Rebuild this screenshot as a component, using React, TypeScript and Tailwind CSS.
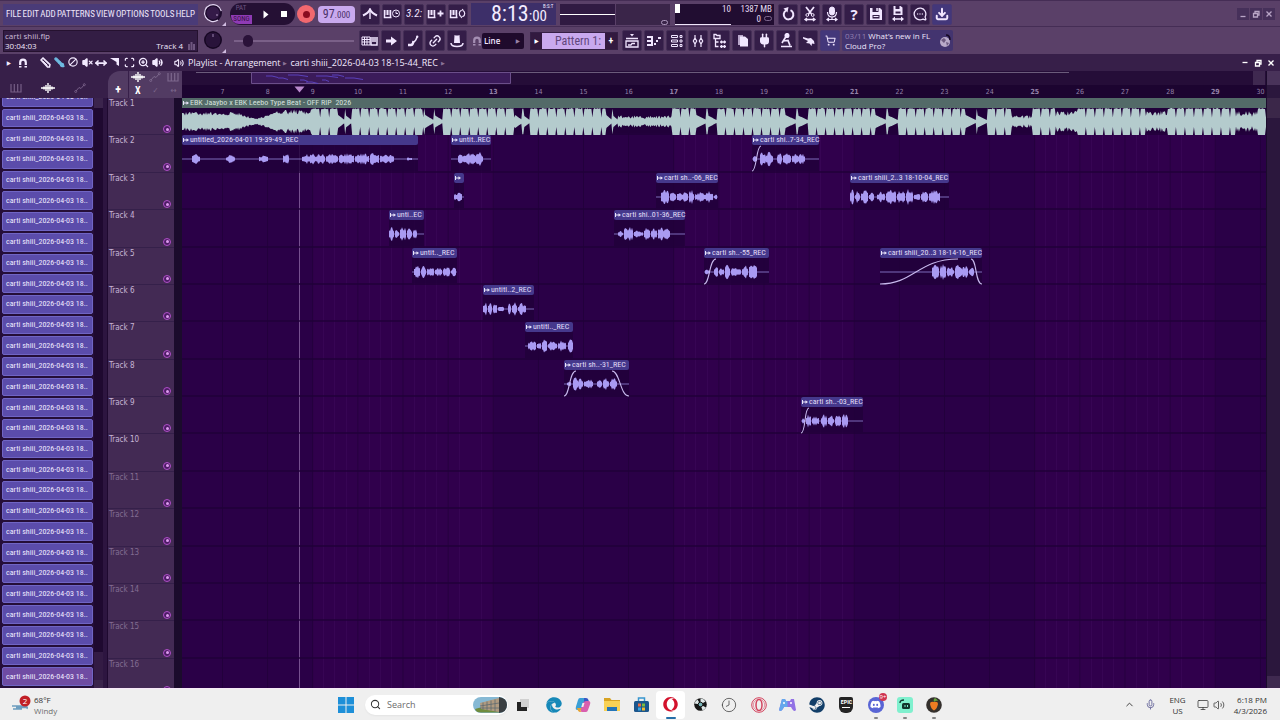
import React from "react";
import {
  Mic, MessageCircleMore, Download, ShoppingCart, Link2, Search, Ban,
  VolumeX, Volume2, MoveHorizontal, Scan, ZoomIn, Brush, Plug,
  ChevronUp, Clock, Monitor,
} from "lucide-react";
import { FaOpera, FaSteam, FaDiscord, FaEdge } from "react-icons/fa";

const noise = (n: number) => {
  const s = Math.sin(n * 127.1 + 11.7) * 43758.5453;
  return s - Math.floor(s);
};

type Blob = [number, number, number];

function blobPath(blobs: Blob[], mid: number, seed: number) {
  return blobs
    .map(([a, b, amp], i) => {
      const top: string[] = [];
      const bottom: string[] = [];
      for (let x = a; x <= b; x++) {
        const t = (x - a) / Math.max(1, b - a);
        const env = Math.pow(Math.sin(Math.PI * (0.12 + t * 0.76)), 0.5);
        const h = Math.max(0.7, (amp + 1) * env * (0.4 + 0.6 * noise(x + seed + i)));
        top.push(`${x},${(mid - h).toFixed(1)}`);
        bottom.unshift(`${x},${(mid + h).toFixed(1)}`);
      }
      return `M${top.join("L")}L${bottom.join("L")}Z`;
    })
    .join("");
}

type Zone = [number, number, "intro" | "full" | "gap" | "low" | "spiky"];
const zones: Zone[] = [
  [0, 130, "intro"], [130, 156, "full"], [156, 170, "gap"], [170, 243, "full"], [243, 261, "gap"],
  [261, 333, "full"], [333, 348, "gap"], [348, 424, "full"], [424, 436, "gap"], [436, 490, "low"],
  [490, 514, "full"], [514, 535, "gap"], [535, 603, "full"], [603, 626, "gap"], [626, 693, "full"],
  [693, 716, "gap"], [716, 783, "full"], [783, 805, "gap"], [805, 829, "full"], [829, 850, "low"],
  [850, 873, "full"], [873, 895, "spiky"], [895, 963, "full"], [963, 985, "spiky"], [985, 1053, "full"],
  [1053, 1075, "spiky"], [1075, 1084, "full"],
];

function beatPath() {
  const top: string[] = [];
  const bottom: string[] = [];
  for (const [a, b, kind] of zones) {
    for (let x = a; x < b; x++) {
      const r = noise(x);
      const t = (x - a) / (b - a);
      let v = 1;
      if (kind === "full") v = (x - a) % 9 === 8 ? 0.3 : 0.9 + r * 0.1;
      if (kind === "gap") v = t > 0.46 && t < 0.54 ? 0.95 : 0.08 + 0.4 * (1 - ((t * 2) % 1));
      if (kind === "low") v = 0.2 + r * 0.25;
      if (kind === "spiky") v = 0.35 + r * 0.45;
      if (kind === "intro") {
        const base = x < 55 ? 0.65 : x < 75 ? 0.65 - (x - 55) * 0.022 : x < 100 ? 0.22 + (x - 75) * 0.024 : 0.8;
        v = base * (0.65 + r * 0.45);
      }
      top.push(`${x},${(13.5 - 13.5 * v).toFixed(1)}`);
      bottom.unshift(`${x},${(13.5 + 13.5 * (kind === "full" ? Math.min(1, v + 0.1) : v)).toFixed(1)}`);
    }
  }
  return `M${top.join("L")}L${bottom.join("L")}Z`;
}

type Clip = { x: number; w: number; label: string; blobs: Blob[]; fade?: string };
const clips: Record<number, Clip[]> = {
  2: [
    { x: 0, w: 236, label: "untitled_2026-04-01 19-39-49_REC", blobs: [[10, 18, 4], [44, 53, 3], [77, 86, 3], [101, 107, 5], [120, 128, 4], [128, 133, 7], [133, 143, 5], [144, 156, 5], [157, 172, 5], [173, 187, 5], [188, 197, 6], [198, 212, 4], [225, 230, 1]] },
    { x: 269, w: 40, label: "untit..REC", blobs: [[7, 12, 4], [12, 24, 6], [24, 32, 7]] },
    { x: 570, w: 67, label: "carti shi..7-34_REC", fade: "M0 25C5 25 4 0 9 0", blobs: [[1, 5, 2], [8, 14, 7], [14, 21, 7], [25, 30, 5], [31, 39, 5], [40, 46, 5], [46, 53, 5]] },
  ],
  3: [
    { x: 272, w: 10, label: "", blobs: [[0, 8, 4]] },
    { x: 474, w: 62, label: "carti sh..-06_REC", blobs: [[5, 13, 7], [14, 20, 4], [21, 32, 4], [33, 38, 7], [39, 50, 4], [50, 57, 6], [58, 61, 3]] },
    { x: 668, w: 99, label: "carti shiii_2..3 18-10-04_REC", blobs: [[0, 4, 8], [5, 10, 5], [11, 18, 7], [19, 24, 4], [27, 35, 5], [36, 46, 7], [47, 55, 6], [56, 63, 8], [64, 70, 3], [71, 78, 5], [79, 90, 7]] },
  ],
  4: [
    { x: 207, w: 35, label: "unti..EC", blobs: [[0, 5, 6], [6, 10, 4], [11, 17, 7], [18, 23, 5], [24, 28, 4]] },
    { x: 432, w: 71, label: "carti shi..01-36_REC", blobs: [[4, 9, 2], [10, 13, 8], [12, 19, 7], [20, 29, 3], [30, 36, 6], [37, 43, 5], [44, 50, 6], [50, 56, 5]] },
  ],
  5: [
    { x: 230, w: 45, label: "untit.._REC", blobs: [[2, 8, 6], [9, 14, 6], [15, 22, 4], [23, 30, 4], [31, 38, 5], [39, 44, 4]] },
    { x: 522, w: 65, label: "carti sh..-55_REC", fade: "M0 25C6 25 5 0 12 0", blobs: [[1, 6, 2], [10, 14, 7], [15, 20, 4], [21, 26, 7], [27, 37, 4], [38, 44, 6], [45, 53, 7]] },
    { x: 698, w: 102, label: "carti shiii_20..3 18-14-16_REC", fade: "M0 25C34 25 38 0 78 0M91 0C97 0 95 25 102 25", blobs: [[52, 59, 7], [60, 66, 8], [67, 74, 5], [75, 82, 7], [82, 88, 6], [89, 94, 4]] },
  ],
  6: [{ x: 301, w: 51, label: "untitl..2_REC", blobs: [[0, 4, 7], [5, 9, 5], [10, 14, 5], [15, 21, 2], [25, 28, 5], [29, 34, 8], [35, 43, 5]] }],
  7: [{ x: 343, w: 48, label: "untitl.._REC", blobs: [[3, 11, 5], [12, 16, 4], [17, 22, 6], [23, 32, 4], [33, 41, 5], [43, 48, 6]] }],
  8: [{ x: 382, w: 65, label: "carti sh..-31_REC", fade: "M0 25C6 25 5 0 12 0M48 0C56 0 56 25 65 25", blobs: [[3, 7, 2], [9, 14, 6], [14, 19, 5], [20, 29, 4], [33, 38, 4], [39, 45, 5], [46, 53, 5]] }],
  9: [{ x: 619, w: 62, label: "carti sh..-03_REC", fade: "M0 25C5 25 3 0 8 0", blobs: [[1, 4, 2], [5, 10, 6], [11, 18, 4], [20, 26, 6], [27, 33, 5], [34, 40, 6], [41, 47, 7]] }],
};

const ClipArrow = () => (
  <svg className="h-2 w-2 shrink-0" viewBox="0 0 8 8" aria-hidden="true">
    <path d="M1.500 2v4M2 4h3" stroke="#e9e4fa" strokeWidth="1" fill="none" /><path d="M4.500 2.200L7 4L4.500 5.800Z" fill="#e9e4fa" />
  </svg>
);

function ClipView({ clip, seed }: { clip: Clip; seed: number }) {
  return (
    <div className="absolute inset-y-0 bg-[#21003a]/80" style={{ left: clip.x, width: clip.w }}>
      <div className="flex h-[10px] items-center rounded-xs bg-[#45388c]">
        <ClipArrow />
        <span className="text-[8px] leading-[10px] whitespace-nowrap text-[#e2dcf6]">{clip.label}</span>
      </div>
      <svg className="h-[27px] w-full" viewBox={`0 0 ${clip.w} 27`} preserveAspectRatio="none" aria-hidden="true">
        <path d={`M0 14H${clip.w}`} stroke="#9c8fe6" strokeWidth="1" opacity="0.75" />
        <path d={blobPath(clip.blobs, 14, seed)} fill="#a99af2" />
        {clip.fade && <path d={clip.fade} transform="translate(0 1)" fill="none" stroke="#c8b9ee" strokeWidth="1.1" />}
      </svg>
    </div>
  );
}

const Btn = ({ label, children, blue }: { label: string; children: React.ReactNode; blue?: boolean }) => (
  <button
    aria-label={label}
    className={`flex h-[21px] w-5 shrink-0 items-center justify-center rounded-xs border text-[#f1e6ff] ${blue ? "border-[#483874] bg-[#43377a]" : "border-[#452f57] bg-[#341d48]"}`}
  >
    {children}
  </button>
);

const Piano = ({ extra }: { extra?: React.ReactNode }) => (
  <svg width="18" height="14" viewBox="0 0 18 14" fill="none" stroke="currentColor" strokeWidth="1.5" aria-hidden="true">
    <path d="M1.500 3v7.500h7M4.500 3v5M7.500 3v7.500" />
    <path d="M3 3v5M6 3v5" strokeWidth="0.8" />
    {extra}
  </svg>
);

const MagnetIcon = ({ className }: { className?: string }) => (
  <svg className={className} width="10" height="10" viewBox="0 0 10 10" fill="none" stroke="currentColor" aria-hidden="true">
    <path d="M2.200 7V4.500a2.800 2.800 0 0 1 5.600 0V7" strokeWidth="2.200" />
    <path d="M1 8.800h2.500M6.500 8.800h2.500" strokeWidth="1.400" />
  </svg>
);

const WaveIcon = ({ className }: { className?: string }) => (
  <svg className={className} width="14" height="10" viewBox="0 0 14 10" stroke="currentColor" strokeWidth="1.400" aria-hidden="true">
    <path d="M0 5h14M3 3.500v3M5 2v6M7 0v10M9 2v6M11 3.500v3" />
  </svg>
);

const LineIcon = () => (
  <svg width="12" height="10" viewBox="0 0 12 10" fill="none" stroke="currentColor" aria-hidden="true">
    <path d="M2 8L5 4.500L7 5.500L10 2" /><circle cx="1.700" cy="8.500" r="1" /><circle cx="10.300" cy="1.700" r="1" />
  </svg>
);

const KeysIcon = () => (
  <svg width="12" height="10" viewBox="0 0 12 10" fill="none" stroke="currentColor" strokeWidth="1.200" aria-hidden="true">
    <path d="M1 1v8h10v-8M4.300 1v8M7.700 1v8" />
  </svg>
);

const Knob = ({ big }: { big?: boolean }) => (
  <svg className="h-6 w-[29px] shrink-0" viewBox="0 0 29 24" role="img" aria-label={big ? "Main volume" : "Main pitch"}>
    <circle cx="12" cy="11" r="9" fill="#1d0b2d" />
    {big ? (
      <>
        <path d="M17 18A8.500 8.500 0 1 1 20.300 9" fill="none" stroke="#e3d5f2" strokeWidth="1.200" />
        <circle cx="12" cy="11" r="6.500" fill="#341a48" />
        <circle cx="16" cy="13" r="1" fill="#8d759e" />
      </>
    ) : (
      <>
        <circle cx="12" cy="11" r="8" fill="#29133a" stroke="#160721" />
        <path d="M12 5v3" stroke="#9a82ae" />
      </>
    )}
    <path d="M25 20v4h-4Z" fill="#cfbbe0" />
  </svg>
);

const WinControls = ({ dim }: { dim?: boolean }) => (
  <div className={`flex items-center gap-px ${dim ? "text-[#b9a5c6]" : "text-white"}`}>
    {["Minimize", "Restore", "Close"].map((n, i) => (
      <button key={n} aria-label={n} className={`flex h-3 w-3 items-center justify-center ${dim ? "bg-[#46305a]" : ""}`}>
        <svg width="8" height="8" viewBox="0 0 8 8" fill="none" stroke="currentColor" strokeWidth="1.300" aria-hidden="true">
          {i === 0 && <path d={dim ? "M1.500 6.500h5" : "M1.500 3.500h5"} />}
          {i === 1 && <path d="M1.500 3.500h4v3.500h-4zM3 3.500v-2h4v3.500h-1.500" />}
          {i === 2 && <path d="M1.500 1.500l5 5M6.500 1.500l-5 5" />}
        </svg>
      </button>
    ))}
  </div>
);

const menus = ["FILE", "EDIT", "ADD", "PATTERNS", "VIEW", "OPTIONS", "TOOLS", "HELP"];

function TopBar() {
  return (
    <header className="shrink-0 bg-[#5a4068]">
      <div className="flex h-[27px] items-center border-t border-b border-[#452d55] pt-px pl-[3px]">
        <nav aria-label="Main menu" className="flex h-[21px] w-[195px] shrink-0 items-center justify-between bg-[#4a3b78] pr-[3px] pl-[3px]">
          {menus.map((m) => (
            <button key={m} className="text-[9px] leading-3 text-[#efe6fa]">{m}</button>
          ))}
        </nav>
        <div className="ml-[3px] flex"><Knob big /></div>
        <div className="flex h-[22px] w-[65px] shrink-0 items-center justify-between rounded-full bg-[#251034] pr-2">
          <button className="flex h-5 w-[22px] flex-col items-center justify-between text-[7px] leading-[9px]">
            <span className="text-[#6c5380]">PAT</span>
            <span className="ml-px w-[21px] rounded-bl-lg bg-[#8f3bb5] text-center text-[#371045]">SONG</span>
          </button>
          <button aria-label="Play" className="pr-px"><svg width="8" height="9" viewBox="0 0 8 9"><path d="M1.500 0.500L6.500 4.500L1.500 8.500Z" fill="#fff" /></svg></button>
          <button aria-label="Stop" className="h-[6px] w-[6px] bg-white" />
        </div>
        <button aria-label="Record" className="ml-0.5 flex size-[18px] shrink-0 items-center justify-center rounded-full bg-[#f2686f]">
          <span className="size-[7px] rounded-full bg-[#8a0d20]" />
        </button>
        <div className="ml-[3px] flex h-[17px] w-[37px] shrink-0 items-center justify-center rounded-sm bg-[#c9a9ee] text-[#4a3068]">
          <button aria-label="Tempo" className="text-[12px] leading-4">97<span className="text-[9px]">.000</span></button>
        </div>
        <div className="ml-[5px] flex shrink-0 gap-0.5">
          <Btn label="Metronome"><svg width="16" height="14" viewBox="0 0 16 14" fill="none" stroke="currentColor"><path d="M8 1v11" strokeWidth="1.400" /><path d="M8 2.500Q6.500 6 1 8.500M8 2.500Q9.500 6 15 8.500" strokeWidth="2" /></svg></Btn>
          <Btn label="Wait for input"><Piano extra={<><circle cx="13" cy="6.500" r="3.500" strokeWidth="1" /><path d="M13 4.500v2h2" strokeWidth="1" /></>} /></Btn>
          <Btn label="Countdown"><span className="text-[11px] leading-3 italic">3.2:</span></Btn>
          <Btn label="Overdub"><Piano extra={<path d="M10.500 6.500h6M13.500 3.500v6" strokeWidth="1.800" />} /></Btn>
          <Btn label="Loop record"><Piano extra={<path d="M12 3.500a3.500 3.500 0 0 0 0 6M14 3.500a3.500 3.500 0 0 1 0 6M14 2l-1.500 2M12 11l1.500-2" strokeWidth="1.200" />} /></Btn>
        </div>
        <div className="ml-[3px] flex h-[22px] w-[85px] shrink-0 items-start justify-end bg-[#3d2f69] pr-[9px] text-[#f3ecff]">
          <span className="text-[22px] leading-[22px]">8:13<span className="text-[15px]">:00</span></span>
          <span className="w-0 -translate-x-1 text-[5px] leading-[6px]">B:S:T</span>
        </div>
        <div className="ml-[4px] grid h-[21px] w-[110px] shrink-0 grid-cols-2 gap-px">
          <div className="flex items-center bg-[#301a42]"><span className="h-px w-full bg-white" /></div>
          <div className="flex items-end justify-end bg-[#3a2549] pr-0.5"><span className="h-[5px] w-[7px] rounded-full border border-[#ad98bd]" /></div>
        </div>
        <div className="ml-[5px] flex h-[21px] w-[99px] shrink-0 items-start bg-[#210d31] text-[9px] leading-[10px] whitespace-nowrap text-[#e6dcf2]">
          <div className="flex h-[21px] w-[46px] flex-col justify-between"><span className="h-[9px] w-[5px] bg-white" /><span className="mr-[-10px] h-px bg-[#f0e6fa]" /></div>
          <div className="w-[10px] text-right">10</div>
          <div className="flex-1 pr-0.5 text-right"><div>1387 MB</div><div className="flex items-center justify-end gap-[3px]">0<span className="h-[5px] w-2 rounded-full border border-[#7c668d]" /></div></div>
        </div>
        <div className="ml-[4px] flex shrink-0 gap-0.5">
          <Btn label="Undo"><svg width="13" height="14" viewBox="0 0 13 14" fill="none"><path d="M8.500 3.200a4.800 4.800 0 1 1-4.500.3" stroke="currentColor" strokeWidth="2" /><path d="M6.500 0l-5 1.500l4 4z" fill="currentColor" /></svg></Btn>
          <Btn label="Cut"><svg width="14" height="16" viewBox="0 0 14 16" fill="none" stroke="currentColor"><path d="M3 1l5.500 7M11 1L5.500 8" strokeWidth="1.800" /><circle cx="4.300" cy="9" r="1.400" /><circle cx="9.700" cy="9" r="1.400" /><path d="M2 13.500h10M4 12l-2 1.500l2 1.500M10 12l2 1.500l-2 1.500" strokeWidth="1.300" /></svg></Btn>
          <Btn label="Microphone"><svg width="14" height="16" viewBox="0 0 14 16" fill="none" stroke="currentColor"><rect x="4.500" y="1" width="5" height="8" rx="2.500" fill="currentColor" /><path d="M2.500 6q0 5 4.500 5t4.500-5M7 11v3M2 13.500h10M4 12l-2 1.500l2 1.500M10 12l2 1.500l-2 1.500" strokeWidth="1.200" /></svg></Btn>
          <Btn label="Help"><span className="font-['Open_Sans',sans-serif] text-[15px] leading-4 font-bold">?</span></Btn>
          <Btn label="Save"><svg width="12" height="12" viewBox="0 0 12 12"><path fillRule="evenodd" d="M0 0h2.500v4h6V0H10l2 2v10H0zM2.500 7v3.500h7V7z" fill="currentColor" /><path d="M6.300 0h1.500v3h-1.500z" fill="currentColor" /><path d="M3.500 8h5v1h-5z" fill="currentColor" /></svg></Btn>
          <Btn label="Save new version"><svg width="12" height="16" viewBox="0 0 12 16"><path fillRule="evenodd" d="M1.500 0h2v3h4V0h1l2 1.500V9h-9zM3.500 5.500v2h5v-2zM0 13l3-2.500v1.700h6v-1.700l3 2.500l-3 2.500v-1.700H3v1.700z" fill="currentColor" /></svg></Btn>
          <Btn label="Chat"><MessageCircleMore size={14} strokeWidth={2.200} className="-scale-x-100" /></Btn>
          <Btn label="Download" blue><Download size={14} strokeWidth={3.400} /></Btn>
        </div>
        <div className="ml-auto pr-[5px]"><WinControls dim /></div>
      </div>

      <div className="flex h-[27px] items-center pl-[3px]">
        <div className="flex h-[22px] w-[195px] shrink-0 items-end justify-between border border-[#25112f] bg-[#331d44] px-px font-['Open_Sans',sans-serif] text-[8px] leading-[10px] text-[#efe6fa]">
          <div><div className="text-[#cdbedb]">carti shiii.flp</div><div>30:04:03</div></div>
          <div className="flex items-end gap-1">Track 4<span className="text-[#6e567f]"><svg width="9" height="10" viewBox="0 0 9 10" fill="currentColor"><path d="M1 3h2v6h-2zM3.500 1h2v8h-2zM6 3h2v6h-2z" /></svg></span></div>
        </div>
        <div className="ml-[3px] flex"><Knob /></div>
        <input
          type="range" aria-label="Position" min={0} max={100} defaultValue={8}
          className="ml-1 h-3 w-[120px] shrink-0 appearance-none bg-transparent [&::-webkit-slider-runnable-track]:h-[2px] [&::-webkit-slider-runnable-track]:bg-[#7a6088] [&::-webkit-slider-thumb]:-mt-[5px] [&::-webkit-slider-thumb]:h-3 [&::-webkit-slider-thumb]:w-[10px] [&::-webkit-slider-thumb]:appearance-none [&::-webkit-slider-thumb]:rounded-full [&::-webkit-slider-thumb]:bg-[#2a1239]"
        />
        <div className="ml-[5px] flex shrink-0 gap-0.5">
          <Btn label="Typing keyboard"><svg width="17" height="12" viewBox="0 0 17 12" fill="none" stroke="currentColor"><path d="M1 2h8v8h-8zM1 4.500h8M1 7h8M3.500 2v8M6 2v8" /><path d="M10 2v8h6v-8M12 2v5M14 2v5" strokeWidth="1.500" /></svg></Btn>
          <Btn label="Step forward"><svg width="11" height="10" viewBox="0 0 11 10"><path d="M0 3.500h5V0.500L11 5L5 9.500V6.500H0z" fill="currentColor" /></svg></Btn>
          <Btn label="Slide"><svg width="12" height="12" viewBox="0 0 12 12" fill="none" stroke="currentColor"><path d="M1 10h3q2 0 2.500-4" strokeWidth="2.400" /><path d="M6.500 7Q9 6 10 2" strokeWidth="1.400" /><circle cx="10.200" cy="1.800" r="1.200" fill="currentColor" stroke="none" /></svg></Btn>
          <Btn label="Link"><Link2 size={14} strokeWidth={2.400} className="-rotate-45" /></Btn>
          <Btn label="Multilink"><svg width="14" height="14" viewBox="0 0 14 14" fill="currentColor"><path d="M4.500 1q2.500 1 5 0l.5 8h-6z" /><path d="M1 9q0 3.500 6 3.500t6-3.500" fill="none" stroke="currentColor" strokeWidth="1.500" /></svg></Btn>
        </div>
        <span className="ml-1 flex w-[11px] shrink-0 justify-center text-[#a58fb3]"><MagnetIcon /></span>
        <div className="relative flex h-4 w-[42px] shrink-0 items-center rounded-xs bg-[#1f0a2c]">
          <select aria-label="Snap" className="w-full appearance-none bg-transparent pl-[2px] font-['Open_Sans',sans-serif] text-[8px] leading-3 font-semibold text-[#f1e6ff]"><option>Line</option></select>
          <span className="absolute right-1 text-[6px] text-[#9883a5]">▶</span>
        </div>
        <div className="ml-[6px] flex h-[18px] w-[88px] shrink-0 items-stretch border border-[#351f45] bg-[#32193f] text-[10px] text-white">
          <button aria-label="Previous pattern" className="w-[11px] text-[6px]">▶</button>
          <button className="flex-1 bg-[#c9a9ee] pr-[4px] text-right text-[12px] leading-4 text-[#61467c]">Pattern 1:</button>
          <button aria-label="Add pattern" className="w-3 font-bold">+</button>
        </div>
        <div className="ml-[4px] flex shrink-0 gap-0.5">
          <Btn label="Playlist"><svg width="14" height="16" viewBox="0 0 14 16" fill="none" stroke="currentColor" strokeWidth="1.300"><path d="M1 5.500h12M1 8h12v6h-12zM3 12h3l1-1.500h3" /><path d="M5 1h4l-2 2.500z" fill="currentColor" stroke="none" /></svg></Btn>
          <Btn label="Piano roll"><svg width="15" height="12" viewBox="0 0 15 12" fill="none" stroke="currentColor" strokeWidth="2"><path d="M0 2h5v8h-5M0 6h5M7 9h2M9 6h2M11 3h3" /></svg></Btn>
          <Btn label="Channel rack"><svg width="13" height="14" viewBox="0 0 13 14" fill="none" stroke="currentColor"><path d="M1.500 1.500h6v2h-6zM1.500 6h6v2h-6zM1.500 10.500h6v2h-6zM10 1.500h2v2h-2zM10 6h2v2h-2zM10 10.500h2v2h-2z" /></svg></Btn>
          <Btn label="Mixer"><svg width="12" height="14" viewBox="0 0 12 14" fill="none" stroke="currentColor" strokeWidth="1.200"><path d="M3 1v3M3 10v3M9 1v3M9 10v3M3 4l1.700 3L3 10L1.300 7zM9 4l1.700 3L9 10L7.300 7z" /></svg></Btn>
          <Btn label="Browser"><svg width="14" height="16" viewBox="0 0 14 16" fill="none" stroke="currentColor" strokeWidth="1.300"><path d="M1 1.500h2l1 1h3v3h-6zM2.500 6v7.500h3M2.500 9h3" /><path d="M7 9h6M7 13.500h6M8.500 7.500v3M11.500 7.500v3M8.500 12v3M11.500 12v3" /></svg></Btn>
          <Btn label="Project"><svg width="11" height="13" viewBox="0 0 11 13"><path d="M1 1h5v2H3v8H1z" fill="#b9a7ca" /><path d="M3 2.500h5L11 5v7.500H3z" fill="currentColor" /></svg></Btn>
          <Btn label="Plugin"><Plug size={15} strokeWidth={2.400} fill="currentColor" className="rotate-0" /></Btn>
          <Btn label="Tempo tapper"><svg width="13" height="15" viewBox="0 0 13 15" fill="none" stroke="currentColor" strokeWidth="1.700"><path d="M1 13.500h11M2 10l4-6.500M3 8l5-.500l2 5" /><circle cx="7" cy="2.500" r="1.700" fill="currentColor" /></svg></Btn>
          <Btn label="Touch"><svg width="13" height="12" viewBox="0 0 13 12"><path d="M1 2L6 3.500L9 3L12 6L12.500 9L10 8.500L9.500 11L7.500 8.500L4 8L6 6L1 3.500z" fill="currentColor" /></svg></Btn>
          <Btn label="Shop" blue><ShoppingCart size={11} strokeWidth={2.200} /></Btn>
        </div>
        <a href="#news" className="ml-0.5 flex h-[21px] w-[111px] shrink-0 items-center justify-between rounded-xs bg-[#43346f] pr-0.5 pl-[3px] font-['Open_Sans',sans-serif] text-[8px] leading-[10px] text-[#eee5fa]">
          <span><span className="text-[#917fb1]">03/11</span> What’s new in FL<br />Cloud Pro?</span>
          <svg width="12" height="14" viewBox="0 0 12 14" aria-hidden="true"><circle cx="6" cy="8" r="5" fill="#b9aac9" /><path d="M2 6l3-2l2 2l-2 3zM7 8l3 1l-2 3z" fill="#6d5a80" /><path d="M7 1q4 0 4 5" stroke="#160923" strokeWidth="1.500" fill="none" /></svg>
        </a>
      </div>
    </header>
  );
}

function TitleBar() {
  const tools: [string, React.ReactNode][] = [
    ["Draw", <svg width="11" height="11" viewBox="0 0 11 11" fill="none" stroke="currentColor"><path d="M1 3L3 1L10 7.500L9.500 10L7.500 10z" strokeWidth="1.500" /><path d="M2.500 3.500l5 5M4 2.500l5 5" /></svg>],
    ["Paint", <Brush size={11} strokeWidth={2.600} className="-scale-x-100 text-[#6fbbe2]" fill="currentColor" />],
    ["Delete", <Ban size={10} strokeWidth={2.800} className="rotate-90" />],
    ["Mute", <VolumeX size={11} strokeWidth={2.800} fill="currentColor" />],
    ["Slip", <MoveHorizontal size={12} strokeWidth={3.500} />],
    ["Slice", <svg width="10" height="10" viewBox="0 0 10 10"><path d="M0 1h9v8L6.500 7.500V5z" fill="currentColor" /></svg>],
    ["Select", <Scan size={11} strokeWidth={2.800} />],
    ["Zoom", <ZoomIn size={11} strokeWidth={2.800} />],
    ["Playback", <Volume2 size={11} strokeWidth={2.800} fill="currentColor" />],
  ];
  return (
    <div className="flex h-[17px] shrink-0 items-center bg-[#371f49] text-[#f3eaff]">
      <button aria-label="Playlist menu" className="flex w-[15px] justify-end pr-1 text-[6px]">▶</button>
      <button aria-label="Snap magnet" className="flex w-4 justify-center"><MagnetIcon /></button>
      <div className="ml-[7px] flex">
        {tools.map(([n, icon]) => <button key={n} aria-label={n} className="flex w-[14px] justify-center">{icon}</button>)}
      </div>
      <div className="flex w-6 justify-end pr-1"><Volume2 size={10} strokeWidth={2.600} /></div>
      <h1 className="flex items-center gap-[3px] font-['Open_Sans',sans-serif] text-[9px] leading-3 whitespace-nowrap">
        Playlist - Arrangement <span className="text-[5px] text-[#8a7498]">▶</span> carti shiii_2026-04-03 18-15-44_REC <span className="text-[5px] text-[#8a7498]">▶</span>
      </h1>
      <div className="ml-auto pr-[3px]"><WinControls /></div>
    </div>
  );
}

function Picker() {
  return (
    <aside className="flex w-[108px] shrink-0 flex-col bg-[#250e38]">
      <div className="flex h-[27px] shrink-0 items-center bg-[#371f49] pt-[7px] pl-[10px] text-[#765e86]">
        <button aria-label="Patterns" className="flex w-[24px] justify-start"><KeysIcon /></button>
        <button aria-label="Audio clips" className="flex w-7 justify-center text-white"><WaveIcon /></button>
        <button aria-label="Automation clips" className="flex w-9 justify-center"><LineIcon /></button>
      </div>
      <div className="flex min-h-0 flex-1">
        <div className="flex w-[93px] flex-col justify-end overflow-hidden pb-px pl-0.5">
          <div className="grid h-[600px] shrink-0 grid-rows-[repeat(29,minmax(0,1fr))]">
            {Array.from({ length: 29 }, (_, i) => (
              <button key={i} className={`my-px flex items-center rounded-xs border border-[#7065c4] px-[3px] text-left text-[8px] leading-4 whitespace-nowrap text-[#f0ebff] ${i === 28 ? "bg-[#6f4ba3]" : "bg-[#5b4cab]"}`}>
                carti shiii_2026-04-03 18..
              </button>
            ))}
          </div>
        </div>
        <div className="ml-px flex w-[9px] flex-col justify-between bg-[#1f0930]">
          <span className="h-[10px] bg-[#3b244c]" />
          <span className="h-9 border-b-8 border-[#3b244c] bg-[#331b44]" />
        </div>
        <div className="w-[5px] border-r border-[#1f0930] bg-[#2d1540]" />
      </div>
    </aside>
  );
}

function TrackHeaders() {
  return (
    <div className="flex w-[74px] shrink-0 flex-col bg-[#1b0b2c]">
      <div className="flex h-[27px] shrink-0 bg-[#371f49]">
        <div className="flex w-full rounded-tl-xl bg-[#523b63] text-[#7d688d]">
          <button aria-label="Add track" className="flex w-[21px] items-end justify-center border-r border-[#371f49] pb-0.5 text-[12px] leading-3 font-bold text-white">+</button>
          <div className="grid flex-1 grid-cols-3 items-center justify-items-center">
            <span className="text-white"><WaveIcon /></span><LineIcon /><KeysIcon />
            <span className="text-[10px] leading-3 font-bold text-white">X</span><span className="text-[8px] leading-3">✓</span><span className="text-[8px] leading-3">↔</span>
          </div>
        </div>
      </div>
      <div className="min-h-0 flex-1 overflow-hidden">
        <div className="grid h-[598px] grid-rows-[repeat(16,minmax(0,1fr))]">
          {Array.from({ length: 16 }, (_, i) => (
            <div key={i} className="mr-2 flex justify-between border-b border-[#35204a] bg-[#432a54] pr-[3px] pb-px pl-px">
              <span className={`font-['DejaVu_Sans_Condensed','DejaVu_Sans',sans-serif] text-[8px] leading-3 whitespace-nowrap ${i < 10 ? "text-[#c6b5d4]" : "text-[#826c92]"}`}>Track {i + 1}</span>
              <span className="flex size-2 items-center justify-center self-end rounded-full border border-[#b04fc8] bg-[#4d1c66]"><span className="size-[3px] rounded-full bg-[#dd9bee]" /></span>
            </div>
          ))}
        </div>
      </div>
    </div>
  );
}

function Minimap() {
  const marks = [[84, 5, 12], [96, 7, 10], [106, 4, 20], [118, 9, 8], [124, 11, 12], [134, 5, 22], [140, 9, 7], [150, 4, 12], [163, 7, 18]];
  return (
    <div className="flex h-[14px] shrink-0 bg-[#250d38]">
      <svg className="h-[14px] w-[1071px]" viewBox="0 0 1071 14" aria-hidden="true">
        <path d="M14 1.500h873" stroke="#6b5b7b" />
        <path d="M69.500 1.500h259v11h-259z" fill="#3b1b5a" stroke="#6b4e8a" />
        {marks.map(([x, y, w], i) => <path key={i} d={`M${x} ${y}h${w / 2}l${w / 2} 1.500`} stroke="#5a41bb" fill="none" />)}
      </svg>
      <span className="w-3 bg-[#3f2950]" />
    </div>
  );
}

function Arrangement() {
  return (
    <main className="relative flex min-w-0 flex-1 flex-col overflow-hidden">
      <Minimap />
      <div className="h-[13px] shrink-0 bg-[#1c0430]">
        <div className="ml-[18px] grid w-[1083px] grid-cols-24 pt-px text-center font-['DejaVu_Sans_Condensed','DejaVu_Sans',sans-serif] text-[7px] leading-3 text-[#9382a8]">
          {Array.from({ length: 24 }, (_, i) => (
            <span key={i} className={(i + 7) % 4 === 1 && i > 3 ? "font-bold" : ""}>{i + 7}</span>
          ))}
        </div>
      </div>
      <div className="relative min-h-0 flex-1 overflow-hidden bg-[#2a0047]">
        <svg className="absolute inset-0 h-full w-full" aria-hidden="true">
          <defs>
            <pattern id="phrase" x="-49" width="361" height="10" patternUnits="userSpaceOnUse">
              <path d="M180 0h181v10h-181z" fill="#33004f" opacity="0.650" />
              <path d="M190.500 0v10M201.500 0v10M213.500 0v10M236.500 0v10M247.500 0v10M258.500 0v10M281.500 0v10M292.500 0v10M303.500 0v10M326.500 0v10M348.500 0v10" stroke="#430d63" opacity="0.350" />
            </pattern>
            <pattern id="bars" x="40" width="45.125" height="10" patternUnits="userSpaceOnUse">
              <path d="M.500 0v10" stroke="#1b0033" opacity="0.600" />
            </pattern>
          </defs>
          <rect width="100%" height="100%" fill="url(#phrase)" />
          <rect width="100%" height="100%" fill="url(#bars)" />
        </svg>
        <div className="absolute inset-y-0 left-[117px] w-px bg-[#76508f]" />
        <div className="relative grid h-[598px] grid-rows-[repeat(16,minmax(0,1fr))]">
          {Array.from({ length: 16 }, (_, i) => (
            <div key={i} className="relative border-b-2 border-[#1f0038]/70">
              {i === 0 && (
                <div className="h-full bg-[#21003a]">
                  <div className="flex h-[10px] items-center bg-[#536a68]">
                    <ClipArrow />
                    <span className="text-[8px] leading-[10px] whitespace-pre text-[#d3e0de]">EBK Jaaybo x EBK Leebo Type Beat - OFF RIP  2026</span>
                  </div>
                  <svg className="h-[27px] w-full" viewBox="0 0 1083 27" preserveAspectRatio="none" aria-hidden="true">
                    <path d={beatPath()} fill="#b4cbcd" />
                  </svg>
                </div>
              )}
              {(clips[i + 1] ?? []).map((c) => <ClipView key={c.x} clip={c} seed={c.x} />)}
            </div>
          ))}
        </div>
      </div>
      <svg className="absolute top-[15px] left-[112px]" width="11" height="7" viewBox="0 0 11 7" aria-hidden="true"><path d="M.500 .500h10l-5 6z" fill="#b989cd" /></svg>
    </main>
  );
}

function TaskIcon({ label, children, run, active }: { label: string; children: React.ReactNode; run?: boolean; active?: boolean }) {
  return (
    <button aria-label={label} className={`relative flex h-7 min-w-[29px] shrink-0 items-center justify-center ${active ? "rounded-sm bg-white" : ""}`}>
      {children}
      {active && <span className="absolute bottom-0 h-0.5 w-[10px] rounded-full bg-[#256fa8]" />}
      {run && <span className="absolute bottom-0 h-0.5 w-1 rounded-full bg-[#858585]" />}
    </button>
  );
}

function Taskbar() {
  return (
    <footer className="grid h-8 shrink-0 grid-cols-[1fr_auto_1fr] items-center border-t border-[#f7e9f8] bg-[#efefef] font-['Open_Sans',sans-serif] text-[#333]">
      <button className="flex items-center gap-[3px] pl-3 text-left text-[8px] leading-[11px]">
        <svg width="19" height="20" viewBox="0 0 19 20" aria-hidden="true">
          <path d="M0 11h13q3 0 2 3M1 14h9M4 12.500h12" stroke="#6d9dbf" strokeWidth="1.300" fill="none" />
          <circle cx="13" cy="6" r="5.500" fill="#c11f26" /><text x="13" y="9" textAnchor="middle" fontSize="8" fontFamily="Open Sans" fill="#fff">2</text>
        </svg>
        <span>68°F<br /><span className="text-[#6d6d6d]">Windy</span></span>
      </button>
      <div className="flex items-center">
        <TaskIcon label="Start"><svg width="16" height="16" viewBox="0 0 16 16"><path d="M0 0h7.500v7.500h-7.500zM8.500 0h7.500v7.500h-7.500zM0 8.500h7.500v7.500h-7.500zM8.500 8.500h7.500v7.500h-7.500z" fill="#1d8fd8" /></svg></TaskIcon>
        <label className="ml-[5px] flex h-5 w-[143px] items-center rounded-full bg-white pl-[5px] shadow-xs">
          <Search size={11} strokeWidth={2.200} />
          <input aria-label="Search" placeholder="Search" className="ml-1.5 w-20 min-w-0 flex-1 bg-transparent text-[9px] placeholder:text-[#6c6c6c]" />
          <svg className="mr-px" width="34" height="16" viewBox="0 0 34 16" aria-hidden="true">
            <rect width="34" height="16" rx="8" fill="#86b9d4" /><path d="M2 12q12-5 25 3.500h-19q-5 0-6-3.500" fill="#6f8c3d" /><path d="M7 6l19-5v14l-18-3z" fill="#b09a80" /><path d="M26 0q8 1 8 8t-8 8z" fill="#3a3f42" /><path d="M10 5.500v7M14 4.500v8.500M18 3.500v10M22 2.500v12M7 9l19-3M7 11h19" stroke="#5e6a70" strokeWidth="0.800" />
          </svg>
        </label>
        <TaskIcon label="Task view"><svg width="14" height="14" viewBox="0 0 14 14"><path d="M4 1h9v9h-9z" fill="#d0d0d0" /><path d="M1 4h4v5h6v4h-10z" fill="#232323" /></svg></TaskIcon>
        <div className="ml-0.5 grid w-[410px] grid-cols-14">
          <TaskIcon label="Edge"><FaEdge size={16} color="#1688b8" /></TaskIcon>
          <TaskIcon label="Copilot"><svg width="16" height="16" viewBox="0 0 16 16"><path d="M5 1h4q2 0 1.500 2l-2 7q-1 3-4 3h-2Q0 13 1 9.500l2-6.500q.5-2 2-2z" fill="#3a9fd6" /><path d="M9 1h2q2 0 2.500 2l.5 2h-4l-1 1z" fill="#3b57c4" /><path d="M11 15h-4q-2 0-1.500-2l2-6q1-3 4-3h2q2.500 0 1.500 3.500l-2 5.500q-.5 2-2 2z" fill="#d95fae" /><path d="M2 11h4.500l-1 2.500q0 1.500 1.500 1.500h-2q-2 0-3-4z" fill="#e5a233" /><path d="M7.500 6h2l-1.200 4h-2z" fill="#efefef" /></svg></TaskIcon>
          <TaskIcon label="File Explorer"><svg width="16" height="14" viewBox="0 0 16 14"><path d="M0 0h6l1.500 2h8.500v11h-16z" fill="#d8a323" /><path d="M0 3h16v10h-16z" fill="#f8d155" /><path d="M3 9h10v4h-10z" fill="#2475b9" /></svg></TaskIcon>
          <TaskIcon label="Store"><svg width="15" height="16" viewBox="0 0 15 16"><path d="M4.500 4v-3h6v3" fill="none" stroke="#3896cf" strokeWidth="1.500" /><rect y="4" width="15" height="11" rx="1.500" fill="#1b568c" /><path d="M4 6.500h3v3h-3z" fill="#ef6c43" /><path d="M8 6.500h3v3h-3z" fill="#7bbd3f" /><path d="M4 10.500h3v3h-3z" fill="#37a6e6" /><path d="M8 10.500h3v3h-3z" fill="#f5bc2e" /></svg></TaskIcon>
          <TaskIcon label="Opera" active><FaOpera size={15} color="#d3122c" /></TaskIcon>
          <TaskIcon label="Recorder"><svg width="15" height="15" viewBox="0 0 15 15"><circle cx="7.500" cy="7.500" r="6.300" fill="#171717" /><path d="M7.500 7.500V1.500a6 6 0 0 1 5 3z" fill="#dfe8e8" /><path d="M7.500 7.500l-6-1a6 6 0 0 1 3-4z" fill="#dfe8e8" /><path d="M7.500 7.500l2 6a6 6 0 0 0 3.500-3z" fill="#dfe8e8" /><circle cx="7.500" cy="7.500" r="2.300" fill="#79b7bb" stroke="#171717" /></svg></TaskIcon>
          <TaskIcon label="Clock"><Clock size={16} strokeWidth={1.200} color="#454545" className="-scale-x-100" /></TaskIcon>
          <TaskIcon label="Opera GX"><svg width="16" height="16" viewBox="0 0 16 16" fill="none" stroke="#d3425d"><circle cx="8" cy="8" r="7.300" /><ellipse cx="8" cy="8" rx="3" ry="5.500" strokeWidth="1.500" /><circle cx="8" cy="8" r="5.700" opacity=".5" /></svg></TaskIcon>
          <TaskIcon label="Game controller"><svg width="17" height="14" viewBox="0 0 17 14"><path d="M3 1h3l1 2h4l1-2h3l2 11q-2 3-5-3h-7q-3 6-5 3z" fill="#9272e5" /><path d="M3 1h3l1 2h1.500v6h-3.500q-3 6-5 3z" fill="#65a8ec" /><circle cx="5" cy="5" r="1" fill="#fff" /><circle cx="12" cy="5" r="1" fill="#fff" /></svg></TaskIcon>
          <TaskIcon label="Steam"><FaSteam size={16} color="#123e68" /></TaskIcon>
          <TaskIcon label="Epic Games"><span className="flex h-4 w-[14px] flex-col items-center rounded-t-xs rounded-b-md bg-[#252525] font-['Roboto_Condensed',sans-serif] text-[6px] leading-[10px] font-bold text-white">EPIC<span className="h-px w-2 bg-white" /></span></TaskIcon>
          <TaskIcon label="Discord" run>
            <span className="flex size-4 items-center justify-center rounded-full bg-[#5965d5]"><FaDiscord size={11} color="#fff" /></span>
            <span className="absolute top-0.5 right-[3px] rounded-full bg-[#cf3452] px-px text-[6px] leading-2 text-white">9+</span>
          </TaskIcon>
          <TaskIcon label="Streamlabs" run><svg width="16" height="16" viewBox="0 0 16 16"><rect width="16" height="16" rx="3" fill="#80f0ce" /><path d="M3 6q0-3 4-3" stroke="#12352e" strokeWidth="1.300" fill="none" /><rect x="5" y="6" width="8" height="6" rx="1.500" fill="#12352e" /><path d="M8 8v2M10.500 8v2" stroke="#80f0ce" /></svg></TaskIcon>
          <TaskIcon label="FL Studio" run><svg width="16" height="16" viewBox="0 0 16 16"><circle cx="8" cy="8" r="7.800" fill="#34302d" /><path d="M8 5q4-1 4 2q-1 5-4 6.500q-3-1.500-4-6.500q0-3 4-2" fill="#ee7c22" /><path d="M8 5q-1-3 1-4q2 1 3 3q-2-1-4 1" fill="#66a63d" /></svg></TaskIcon>
        </div>
      </div>
      <div className="flex items-center justify-end pr-[13px] text-center text-[8px] leading-[11px] whitespace-nowrap">
        <ChevronUp size={11} />
        <Mic size={11} className="ml-[10px] text-[#66669a]" />
        <span className="ml-[13px]">ENG<br />US</span>
        <Monitor size={12} strokeWidth={1.500} className="ml-[11px]" />
        <Volume2 size={12} strokeWidth={1.500} className="ml-1" />
        <span className="ml-[9px] text-right">6:18 PM<br />4/3/2026</span>
      </div>
    </footer>
  );
}

export default function App() {
  return (
    <div className="flex h-screen flex-col overflow-hidden bg-[#250d38] font-['Liberation_Sans_Narrow','Roboto_Condensed','DejaVu_Sans_Condensed',sans-serif]">
      <TopBar />
      <TitleBar />
      <div className="flex min-h-0 flex-1">
        <Picker />
        <TrackHeaders />
        <Arrangement />
        <div className="flex w-[14px] shrink-0 flex-col border-l border-[#1b0b2c] bg-[#2b173d]">
          <span className="h-[14px] bg-[#49335a]" />
          <span className="mt-[13px] h-5 bg-[#3b2749]" />
          <span className="mt-auto h-3 bg-[#3f2950]" />
        </div>
      </div>
      <Taskbar />
    </div>
  );
}
